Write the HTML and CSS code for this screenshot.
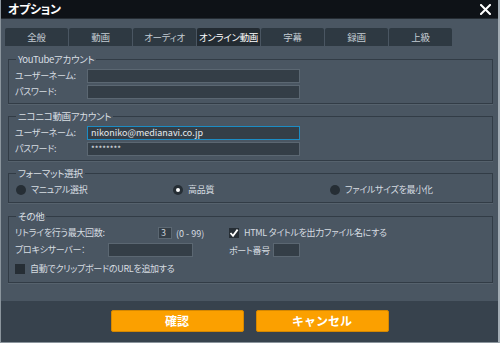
FILE: index.html
```html
<!DOCTYPE html>
<html lang="ja">
<head>
<meta charset="utf-8">
<title>オプション</title>
<link rel="stylesheet" href="styles.css">
</head>
<body>
<div class="window">
  <div class="titlebar">
    <span class="title">オプション</span>
    <svg class="close" width="11" height="11" viewBox="0 0 11 11"><path d="M1 1 L10 10 M10 1 L1 10" stroke="#ffffff" stroke-width="2" stroke-linecap="square"/></svg>
  </div>
  <div class="main">
    <div class="tabs">
      <div class="tab">全般</div>
      <div class="tab">動画</div>
      <div class="tab">オーディオ</div>
      <div class="tab active">オンライン動画</div>
      <div class="tab">字幕</div>
      <div class="tab">録画</div>
      <div class="tab">上級</div>
    </div>

    <fieldset class="group g-youtube">
      <legend>YouTubeアカウント</legend>
      <div class="row"><span class="lbl">ユーザーネーム:</span><span class="input wide"></span></div>
      <div class="row"><span class="lbl">パスワード:</span><span class="input wide"></span></div>
    </fieldset>

    <fieldset class="group g-nico">
      <legend>ニコニコ動画アカウント</legend>
      <div class="row"><span class="lbl">ユーザーネーム:</span><span class="input wide focus">nikoniko@medianavi.co.jp</span></div>
      <div class="row"><span class="lbl">パスワード:</span><span class="input wide pw">********</span></div>
    </fieldset>

    <fieldset class="group g-format">
      <legend>フォーマット選択</legend>
      <div class="radios">
        <div class="radio-item"><span class="radio"></span>マニュアル選択</div>
        <div class="radio-item"><span class="radio on"></span>高品質</div>
        <div class="radio-item"><span class="radio"></span>ファイルサイズを最小化</div>
      </div>
    </fieldset>

    <fieldset class="group g-other">
      <legend>その他</legend>
      <div class="orow r1">
        <div class="cell"><span class="lbl retry">リトライを行う最大回数:</span><span class="input num">3</span><span class="range">(0 - 99)</span></div>
        <div class="cell"><span class="check on"><svg width="10" height="10" viewBox="0 0 10 10"><path d="M1.5 5 L4 7.8 L8.6 1.6" fill="none" stroke="#ffffff" stroke-width="1.8"/></svg></span><span class="ck-lbl">HTML タイトルを出力ファイル名にする</span></div>
      </div>
      <div class="orow r2">
        <div class="cell"><span class="lbl proxy">プロキシサーバー：</span><span class="input proxy-in"></span></div>
        <div class="cell"><span class="port-lbl">ポート番号</span><span class="input port"></span></div>
      </div>
      <div class="orow r3">
        <div class="cell"><span class="check"></span><span class="ck-lbl">自動でクリップボードのURLを追加する</span></div>
      </div>
    </fieldset>
  </div>
  <div class="footer">
    <button class="btn">確認</button>
    <button class="btn">キャンセル</button>
  </div>
</div>
</body>
</html>
```
FILE: styles.css
```css
* { box-sizing: border-box; }
html, body { margin: 0; padding: 0; }
body {
  width: 500px;
  height: 343px;
  overflow: hidden;
  font-family: "Noto Sans CJK JP", "Noto Sans", sans-serif;
  font-size: 9px;
  letter-spacing: -0.3px;
  color: #d6dce1;
  font-feature-settings: "palt";
  white-space: nowrap;
}
.window {
  width: 500px;
  height: 343px;
  display: flex;
  flex-direction: column;
  background: #4a5662;
  border-left: 1px solid #8b959d;
  border-right: 2px solid #a3adb5;
  border-bottom: 1px solid #8b959d;
}
.titlebar {
  height: 19px;
  flex: none;
  background: #0e1217;
  border-bottom: 1px solid #252c33;
  display: flex;
  align-items: center;
  justify-content: space-between;
  padding: 0 6px 0 7px;
}
.title {
  color: #ffffff;
  font-size: 12px;
  font-weight: bold;
  line-height: 18px;
  letter-spacing: -0.3px;
}
.close { display: block; margin-right: 1px; }
.main {
  flex: 1;
  padding: 9px 5px 0 7px;
}
.tabs {
  display: flex;
  gap: 1px;
  margin-left: -3px;
  height: 18px;
}
.tab {
  width: 63px;
  height: 18px;
  background: #2e3942;
  border-radius: 2px 2px 0 0;
  color: #c4ccd3;
  text-align: center;
  line-height: 18px;
  font-size: 9.5px;
}
.tab.active {
  background: #232b32;
  color: #ffffff;
}
.group {
  margin: 0;
  border: 1px solid #323c46;
  box-shadow: 0 1px 0 #56626d;
  padding: 0 6px;
  min-width: 0;
}
.group legend {
  padding: 0 2px;
  margin-left: 1px;
  line-height: 12px;
  height: 12px;
  font-size: 9.5px;
  color: #d9dfe4;
}
.g-youtube { margin-top: 7px; padding-top: 4px; padding-bottom: 4px; }
.g-nico { margin-top: 6px; padding-top: 4px; padding-bottom: 4px; }
.g-format { margin-top: 6px; padding-top: 4px; padding-bottom: 5px; }
.g-other { margin-top: 7px; padding-top: 4px; padding-bottom: 6px; }
.row {
  display: flex;
  align-items: center;
  height: 14px;
}
.row + .row { margin-top: 2px; }
.lbl {
  width: 72px;
  flex: none;
  line-height: 14px;
}
.input {
  display: block;
  height: 14px;
  background: #343e47;
  border: 1px solid #5b6772;
  color: #e6eaee;
  font-size: 9px;
  letter-spacing: 0;
  line-height: 12px;
  padding: 0 3px;
}
.input.wide { width: 213px; }
.input.focus { border-color: #1c8cc4; }
.input.pw { font-size: 8px; }
.radios {
  display: grid;
  grid-template-columns: 1fr 1fr 1fr;
  height: 14px;
  align-items: center;
}
.radio-item {
  display: flex;
  align-items: center;
  line-height: 14px;
}
.radio {
  width: 10px;
  height: 10px;
  border-radius: 50%;
  background: #262e35;
  margin-left: 1px;
  margin-right: 5px;
  flex: none;
  display: flex;
  align-items: center;
  justify-content: center;
}
.radio.on::after {
  content: "";
  width: 4px;
  height: 4px;
  border-radius: 50%;
  background: #ffffff;
}
.orow {
  display: grid;
  grid-template-columns: 214px 1fr;
  align-items: center;
}
.orow .cell {
  display: flex;
  align-items: center;
}
.r1 { height: 12px; }
.r2 { height: 14px; margin-top: 5px; }
.r3 { height: 14px; margin-top: 5px; }
.lbl.retry { width: 143px; }
.lbl.proxy { width: 93px; }
.input.num {
  width: 14px;
  height: 12px;
  line-height: 10px;
  padding: 0 2px;
  font-size: 9px;
  color: #c9d0d6;
}
.range { margin-left: 4px; font-size: 9px; letter-spacing: 0; }
.input.proxy-in { width: 85px; }
.port-lbl { width: 44px; flex: none; }
.input.port { width: 27px; }
.check {
  width: 10px;
  height: 10px;
  background: #262e35;
  flex: none;
  margin-right: 5px;
  display: flex;
  align-items: center;
  justify-content: center;
}
.check svg { display: block; }
.ck-lbl { line-height: 14px; }
.footer {
  height: 41px;
  flex: none;
  background: #37424d;
  display: flex;
  justify-content: center;
  align-items: flex-start;
  padding-top: 9px;
  gap: 12px;
}
.btn {
  width: 133px;
  height: 22px;
  background: #fba000;
  border: 1px solid #d58700;
  border-radius: 2px;
  color: #ffffff;
  font-family: "Noto Sans CJK JP", "Noto Sans", sans-serif;
  font-size: 12px;
  font-weight: bold;
  padding: 0;
  line-height: 20px;
}
```
